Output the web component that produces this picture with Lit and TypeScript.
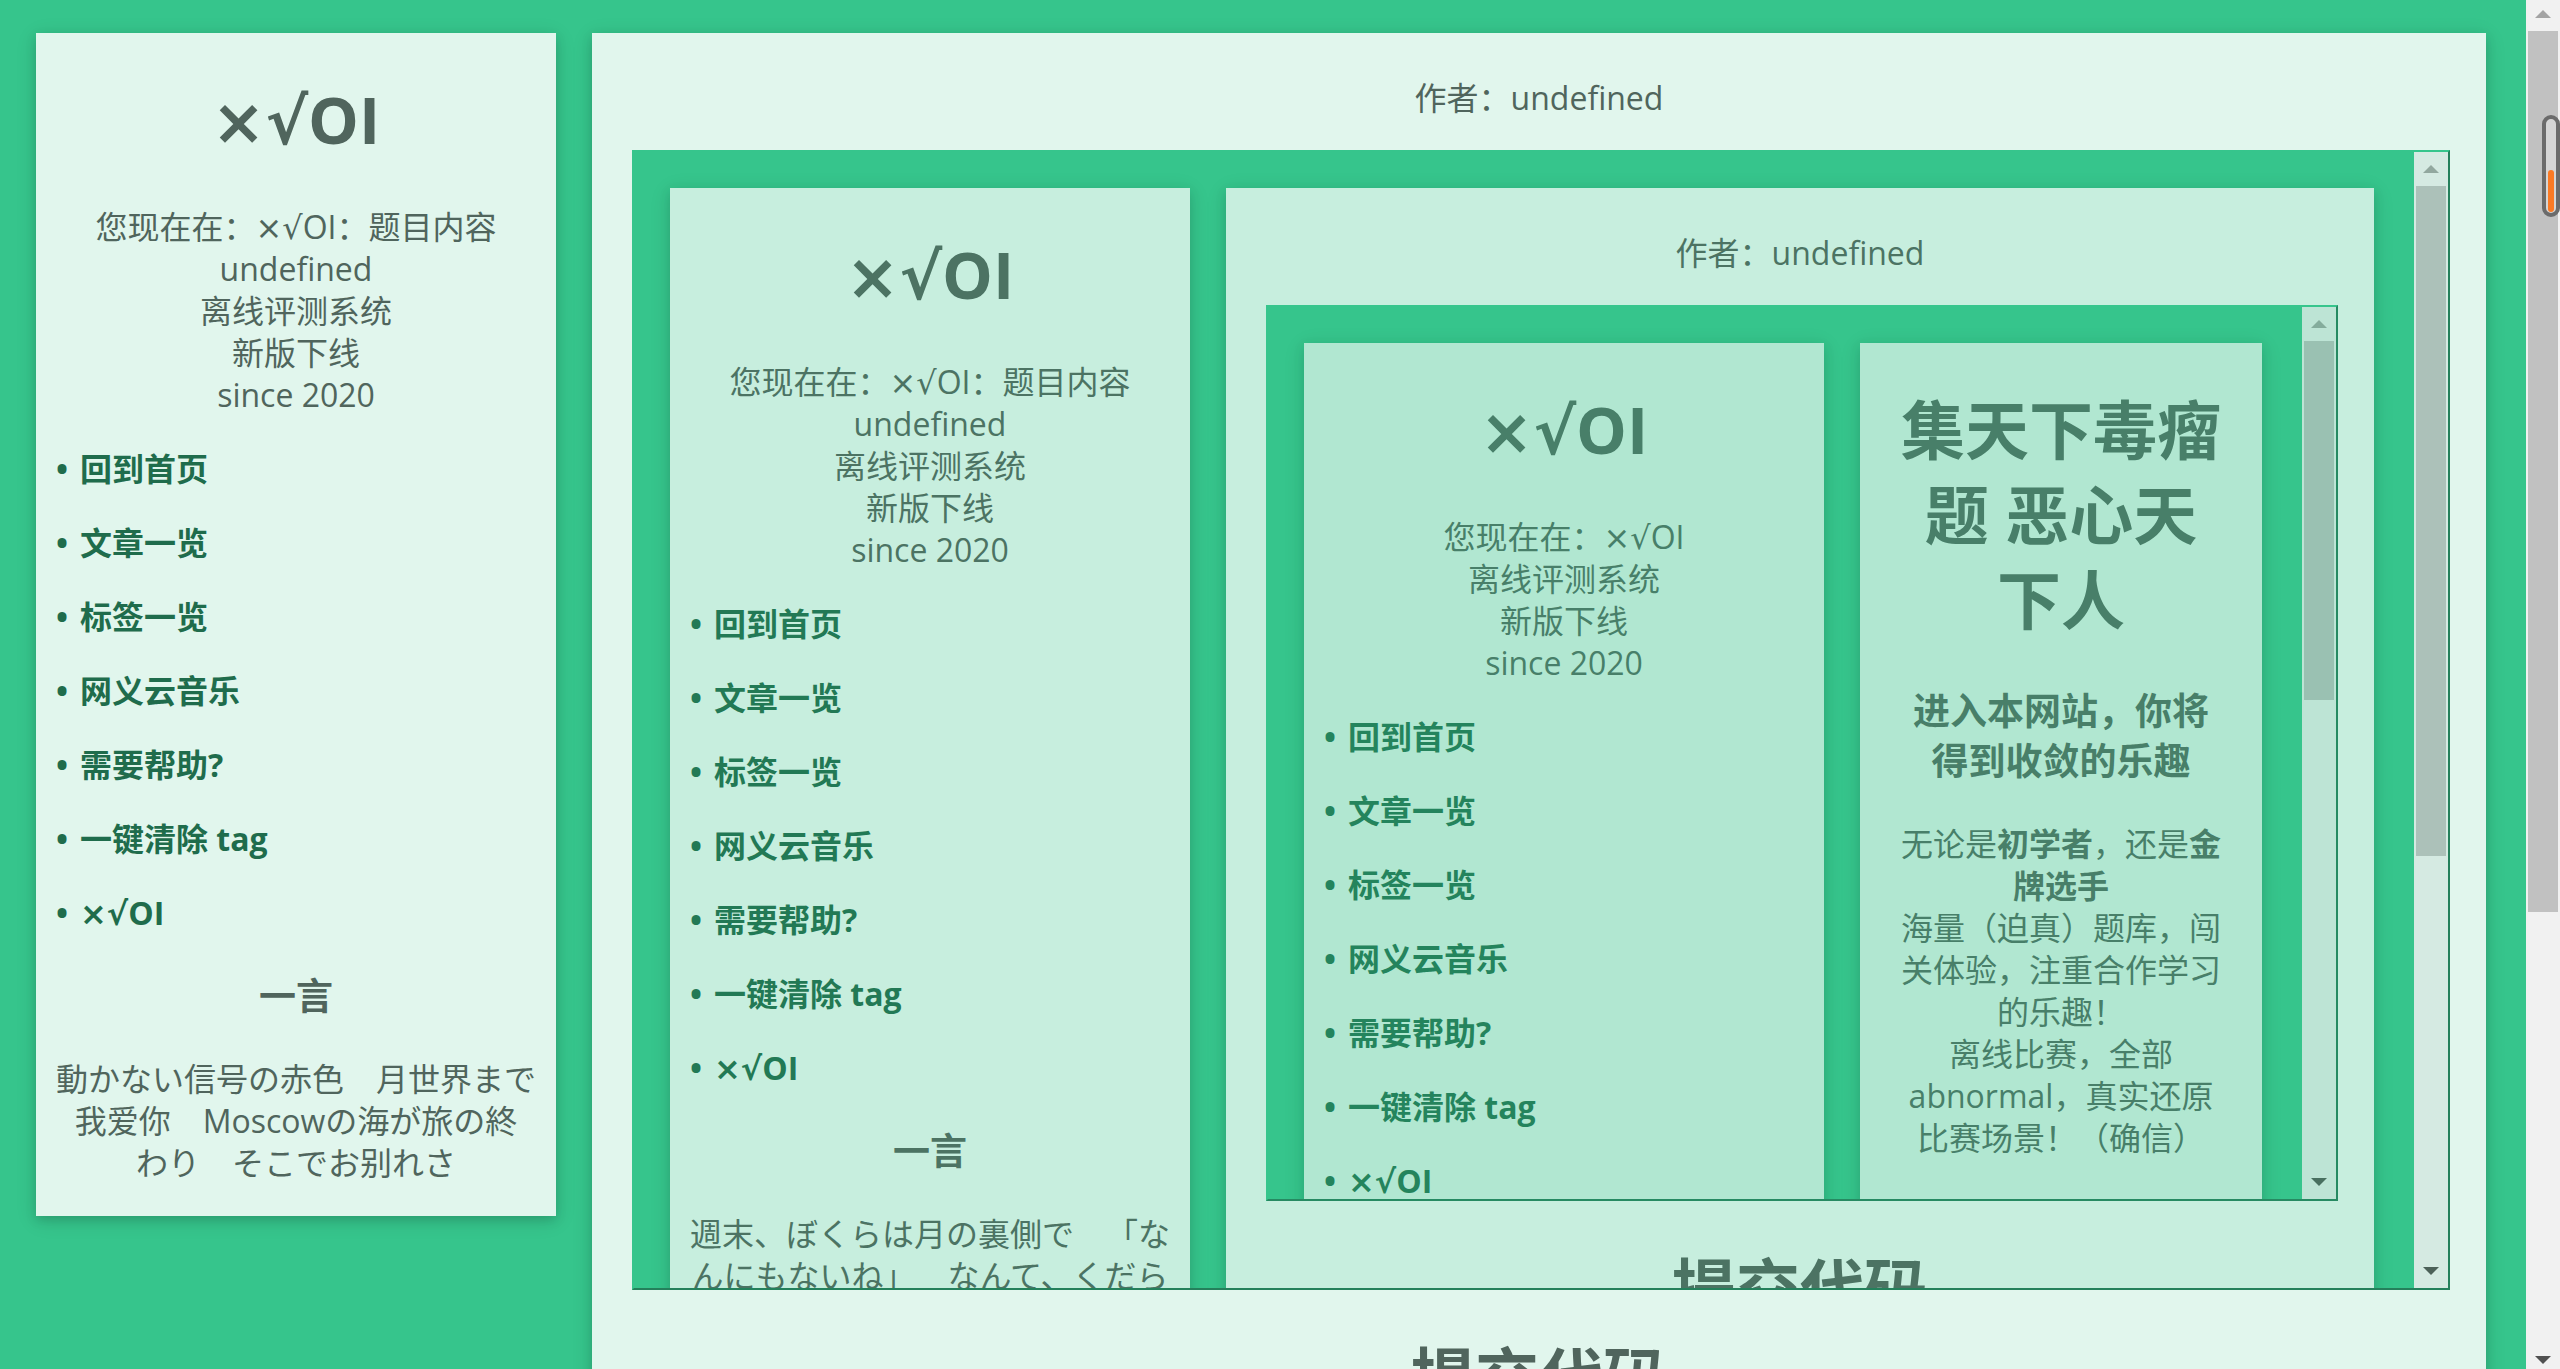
import { LitElement, html, css, nothing } from "lit";
import { customElement, property } from "lit/decorators.js";
import { styleMap } from "lit/directives/style-map.js";

interface PageData {
  status: string[];
  quote: string;
  paneHeight?: number;
  thumbHeight: number;
  child?: PageData;
}

const NAV = ["回到首页", "文章一览", "标签一览", "网义云音乐", "需要帮助?", "一键清除 tag", "×√OI"];

const HOME: PageData = {
  status: ["您现在在：×√OI", "离线评测系统", "新版下线", "since 2020"],
  quote: "",
  thumbHeight: 359,
};

const PROBLEM_STATUS = ["您现在在：×√OI：题目内容", "undefined", "离线评测系统", "新版下线", "since 2020"];

const INNER: PageData = {
  status: PROBLEM_STATUS,
  quote: "週末、ぼくらは月の裏側で　「なんにもないね」　なんて、くだらないことを",
  paneHeight: 896,
  thumbHeight: 670,
  child: HOME,
};

const OUTER: PageData = {
  status: PROBLEM_STATUS,
  quote: "動かない信号の赤色　月世界まで我爱你　Moscowの海が旅の終\nわり　そこでお别れさ",
  paneHeight: 1140,
  thumbHeight: 881,
  child: INNER,
};

/** Sets the × and √ signs of a text in the wide symbol face. */
const withSigns = (text: string) =>
  text.split(/(×√)/).map((part) => (part === "×√" ? html`<span class="signs">${part}</span>` : part));

/** Classic scroll bar with arrow buttons; the thumb sits at the top of the track. */
@customElement("oi-scrollbar")
export class OiScrollbar extends LitElement {
  @property({ type: Number }) thumb = 0;

  static styles = css`
    :host {
      display: flex;
      flex-direction: column;
      flex: 0 0 34px;
      box-sizing: border-box;
      background: #f1f1f1;
      overflow: hidden;
    }
    .arrow {
      flex: 0 0 34px;
      display: flex;
      align-items: center;
      justify-content: center;
      padding: 0;
      border: 0;
      background: none;
    }
    .up {
      color: #a3a3a3;
    }
    .down {
      color: #505050;
    }
    .track {
      flex: 1;
      min-height: 0;
      padding: 0 2px;
    }
    .thumb {
      background: #c1c1c1;
    }
    svg {
      display: block;
      fill: currentColor;
    }
  `;

  render() {
    return html`
      <button class="arrow up" aria-label="向上滚动">
        <svg width="16" height="8" viewBox="0 0 16 8"><path d="M8 0 16 8H0z" /></svg>
      </button>
      <div class="track">
        <div class="thumb" style=${styleMap({ height: `${this.thumb}px` })}></div>
      </div>
      <button class="arrow down" aria-label="向下滚动">
        <svg width="16" height="8" viewBox="0 0 16 8"><path d="M0 0H16L8 8z" /></svg>
      </button>
    `;
  }
}

/** One page: side card and main card. A problem page embeds another page. */
@customElement("oi-page")
export class OiPage extends LitElement {
  @property({ attribute: false }) data: PageData = HOME;

  static styles = css`
    :host {
      display: flex;
      flex: 1;
      min-width: 0;
      align-items: flex-start;
      gap: 36px;
      box-sizing: border-box;
      padding: 36px 40px 36px 36px;
      background: #36c58c;
      color: #555;
      font-family: "Open Sans", "Noto Sans CJK SC", sans-serif;
      font-size: 32px;
      line-height: 42px;
      text-align: center;
      text-spacing-trim: space-all;
    }
    .card {
      display: flow-root;
      box-sizing: border-box;
      background: #fff;
      opacity: 0.85;
      box-shadow: 0 4px 10px rgba(0, 0, 0, 0.16), 0 4px 20px rgba(0, 0, 0, 0.12);
    }
    .side {
      flex: 0 0 520px;
      padding: 0 20px;
    }
    .main {
      flex: 1;
      min-width: 0;
      padding: 0 36px 36px;
    }
    .signs {
      font-family: "DejaVu Sans", sans-serif;
      line-height: 0;
    }
    h1 {
      margin: 44px 0;
      font-size: 64px;
      line-height: 85px;
    }
    h3 {
      margin: 37px 0;
      font-size: 37px;
      line-height: 50px;
    }
    p {
      margin: 32px 0;
    }
    .status {
      margin: 0;
    }
    .quote {
      white-space: pre-line;
    }
    .nav {
      margin: 32px 0;
      padding: 0;
      list-style: none;
      display: grid;
      gap: 32px;
      text-align: left;
      font-weight: bold;
    }
    .nav a {
      color: #1b5d41;
      text-decoration: none;
    }
    .nav a::before {
      content: "•";
      display: inline-block;
      width: 24px;
    }
    .author {
      margin: 44px 0 31px;
    }
    .pane {
      display: flex;
      box-sizing: border-box;
      margin-left: 4px;
      overflow: hidden;
      border: 2px solid;
      border-color: #36c58c #217453 #217453 #36c58c;
    }
  `;

  private renderProblem(child: PageData) {
    return html`
      <p class="author">作者：undefined</p>
      <div class="pane" style=${styleMap({ height: `${this.data.paneHeight}px` })}>
        <oi-page .data=${child}></oi-page>
        <oi-scrollbar .thumb=${child.thumbHeight}></oi-scrollbar>
      </div>
      <h1>提交代码</h1>
    `;
  }

  private renderHome() {
    return html`
      <h1>集天下毒瘤题 恶心天下人</h1>
      <h3>进入本网站，你将得到收敛的乐趣</h3>
      <p>
        无论是<b>初学者</b>，还是<b>金牌选手</b><br />
        海量（迫真）题库，闯关体验，注重合作学习的乐趣！<br />
        离线比赛，全部 abnormal，真实还原比赛场景！（确信）
      </p>
    `;
  }

  render() {
    const { status, quote, child } = this.data;
    return html`
      <aside class="card side">
        <h1>${withSigns("×√OI")}</h1>
        ${status.map((line) => html`<div class="status">${withSigns(line)}</div>`)}
        <ul class="nav">
          ${NAV.map((label) => html`<li><a href="#">${withSigns(label)}</a></li>`)}
        </ul>
        <h3>一言</h3>
        ${quote ? html`<p class="quote" lang="ja">${quote}</p>` : nothing}
      </aside>
      <main class="card main">${child ? this.renderProblem(child) : this.renderHome()}</main>
    `;
  }
}

@customElement("app-root")
export class AppRoot extends LitElement {
  static styles = css`
    :host {
      display: flex;
      position: relative;
      height: 100vh;
      overflow: hidden;
      background: #36c58c;
    }
    .page {
      margin-top: -3px;
    }
    .bar {
      margin: -3px 0 -8px;
    }
    .gauge {
      position: absolute;
      top: 115px;
      right: 0;
      display: flex;
      align-items: flex-end;
      box-sizing: border-box;
      width: 18px;
      height: 102px;
      padding: 1px 2px;
      border: 4px solid #6b6b6b;
      border-radius: 9px;
      background: #d5d5d5;
    }
    .level {
      flex: 1;
      height: 42px;
      border-radius: 3px;
      background: #fb7a24;
    }
  `;

  render() {
    return html`
      <oi-page class="page" .data=${OUTER}></oi-page>
      <oi-scrollbar class="bar" .thumb=${OUTER.thumbHeight}></oi-scrollbar>
      <div class="gauge"><div class="level"></div></div>
    `;
  }
}
